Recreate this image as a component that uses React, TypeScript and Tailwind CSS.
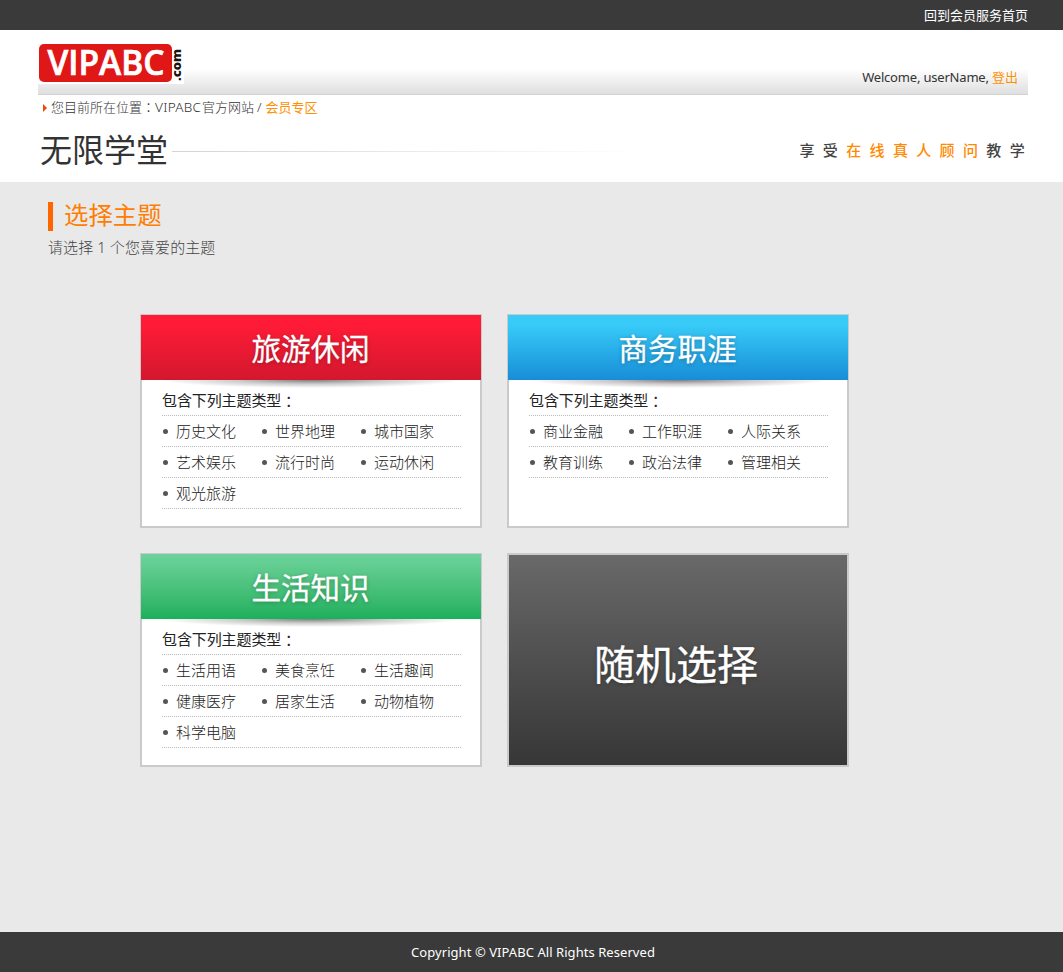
import React from "react";

type Topic = {
  title: string;
  headerClass: string;
  rows: string[][];
};

const topics: Topic[] = [
  {
    title: "旅游休闲",
    headerClass: "bg-linear-to-b from-[#ff1b37] from-15% to-[#d2182d]",
    rows: [
      ["历史文化", "世界地理", "城市国家"],
      ["艺术娱乐", "流行时尚", "运动休闲"],
      ["观光旅游"],
    ],
  },
  {
    title: "商务职涯",
    headerClass: "bg-linear-to-b from-[#38cbf8] from-15% to-[#188dd7]",
    rows: [
      ["商业金融", "工作职涯", "人际关系"],
      ["教育训练", "政治法律", "管理相关"],
    ],
  },
  {
    title: "生活知识",
    headerClass: "bg-linear-to-b from-[#6dd39c] to-[#19b05c]",
    rows: [
      ["生活用语", "美食烹饪", "生活趣闻"],
      ["健康医疗", "居家生活", "动物植物"],
      ["科学电脑"],
    ],
  },
];

function Logo() {
  return (
    <svg width="146" height="42" viewBox="0 0 146 42" className="block overflow-visible bg-white">
      <rect x="1" y="2" width="133" height="38" rx="5" fill="#e01717" />
      <text x="9.5" y="33" textLength="117" lengthAdjust="spacingAndGlyphs" fontSize="34" fontWeight="600" fill="#fff" stroke="#fff" strokeWidth="0.7" fontFamily="'Open Sans', sans-serif">
        VIPABC
      </text>
      <text transform="translate(142.5 39) rotate(-90)" textLength="32" lengthAdjust="spacingAndGlyphs" fontSize="13" fontWeight="800" fill="#1c1210" fontFamily="'Open Sans', sans-serif">
        .com
      </text>
    </svg>
  );
}

function Colon() {
  return (
    <span lang="zh-TW" className="font-['Noto_Sans_CJK_TC',sans-serif]">
      ：
    </span>
  );
}

function TopicCard({ topic }: { topic: Topic }) {
  return (
    <section className="flex h-[214px] w-[342px] flex-col border border-[#cacaca] bg-white">
      <h3 className={"flex h-[65px] shrink-0 items-center justify-center pt-[3px] pr-px text-[29.5px] leading-none text-white [-webkit-text-stroke:0.3px_white] [text-shadow:0_1px_4px_rgba(0,0,0,0.3)] " + topic.headerClass}>
        {topic.title}
      </h3>
      <div className="flex-1 border-x border-b border-[#cacaca] bg-[radial-gradient(ellipse_150px_8px_at_50%_0,rgba(0,0,0,0.5),rgba(0,0,0,0.2)_50%,transparent)] px-5 text-[15px] text-[#222]">
        <h4 className="flex h-9 w-[299px] items-center border-b border-dotted border-[#bbb] pt-[5px] leading-none tracking-[-0.1px]">
          包含下列主题类型
          <Colon />
        </h4>
        {topic.rows.map((row) => (
          <ul key={row[0]} className="flex h-[31px] w-[299px] items-center border-b border-dotted border-[#bbb] leading-none font-light">
            {row.map((name) => (
              <li key={name} className="flex w-[99px] shrink-0 items-center pt-px pl-px">
                <span className="mr-2 size-[5px] rounded-full bg-[#555]" />
                {name}
              </li>
            ))}
          </ul>
        ))}
      </div>
    </section>
  );
}

export default function App() {
  return (
    <div className="flex h-[972px] w-[1063px] flex-col bg-[#e9e9e9] font-['Noto_Sans','Noto_Sans_CJK_SC',sans-serif] text-[13px]">
      <div className="flex h-[30px] items-center justify-end bg-[#3a3a3a] pt-0.5 pr-[35px] text-white">
        <a>回到会员服务首页</a>
      </div>

      <header className="h-[152px] bg-white pr-[35px] pl-[38px]">
        <div className="flex h-[65px] items-start justify-between border-b border-[#d2d2d2] bg-linear-to-b from-white from-60% to-[#dfdfdf] pt-3">
          <Logo />
          <p className="mt-[25px] mr-[10px] leading-5 tracking-[-0.19px] text-[#333]">
            Welcome, userName, <a className="tracking-normal text-[#ff9000]">登出</a>
          </p>
        </div>
        <nav className="flex h-[25px] items-center pl-[5px] font-light text-[#333]">
          <svg width="4" height="8" viewBox="0 0 4 8" className="mr-1">
            <path d="M0 0 4 4 0 8Z" fill="#f04a00" />
          </svg>
          <span>
            您目前所在位置
            <Colon />
          </span>
          <span className="w-[47px] text-[13.5px] tracking-[0.3px]">VIPABC</span>
          <span>官方网站</span>
          <span className="mr-1 ml-[3px]">/</span>
          <a className="font-normal text-[#ff9000]">会员专区</a>
        </nav>
        <div className="flex h-[60px] items-center justify-between">
          <div className="flex items-center">
            <h1 className="ml-0.5 text-[32px] leading-none text-[#333]">无限学堂</h1>
            <div className="mt-0.5 ml-1 h-px w-[470px] bg-linear-to-r from-[#d4d4d4] to-white" />
          </div>
          <p className="-mr-[5px] text-[15px] font-medium tracking-[8.35px] text-[#444]">
            享受<span className="text-[#ff8a00]">在线真人顾问</span>教学
          </p>
        </div>
      </header>

      <main className="h-[750px] pt-5">
        <h2 className="ml-12 flex h-[29px] items-center border-l-5 border-[#ff6600] pb-0.5 pl-[11px] text-[24.4px] leading-none text-[#ff7d00]">选择主题</h2>
        <p className="mt-[6px] ml-12 text-[15px] leading-5 font-light tracking-[0.08px] text-[#444]">请选择 1 个您喜爱的主题</p>
        <div className="mt-[57px] ml-[140px] grid w-[709px] grid-cols-2 gap-[25px]">
          {topics.map((t) => (
            <TopicCard key={t.title} topic={t} />
          ))}
          <button className="flex h-[214px] w-[342px] items-center justify-center border-2 border-[#cacaca] bg-linear-to-b from-[#696969] to-[#373737] pt-2 pr-1 text-[41px] leading-none text-white [-webkit-text-stroke:0.3px_white] [text-shadow:0_1px_4px_rgba(0,0,0,0.3)]">
            随机选择
          </button>
        </div>
      </main>

      <footer className="flex h-10 items-center justify-center bg-[#3a3a3a] pt-0.5 pl-[3px] text-white">
        <span className="tracking-[0.06px]">Copyright © VIPABC All Rights Reserved</span>
      </footer>
    </div>
  );
}
